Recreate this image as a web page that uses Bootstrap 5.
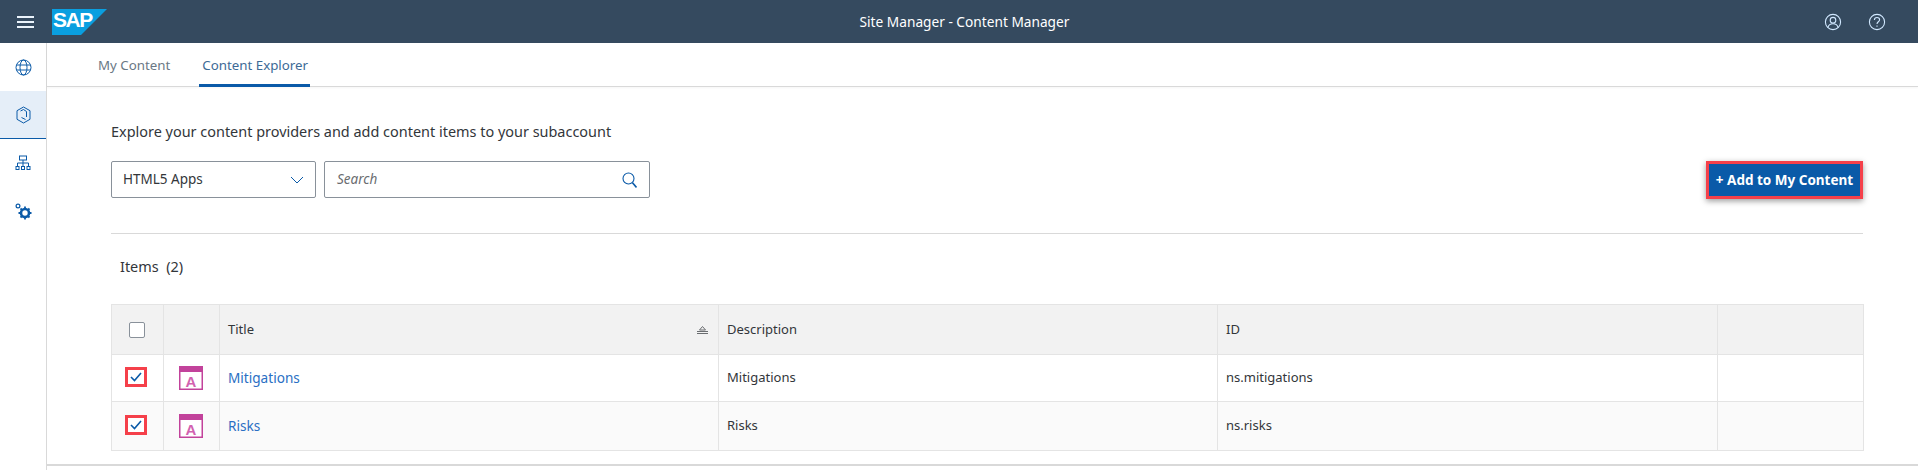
<!DOCTYPE html>
<html lang="en"><head><meta charset="utf-8"><title>Content Manager</title>
<link rel="stylesheet" href="https://cdn.jsdelivr.net/npm/bootstrap@5.3.0/dist/css/bootstrap.min.css">
<style>
html,body{height:470px;overflow:hidden}
body{font-family:"Noto Sans","Liberation Sans",sans-serif;font-size:14px;color:#32363a;background:#fff}
.shell-bar{height:43px;background:#354a5f;color:#fff;padding-left:17px;padding-right:32px}
.shell-title{font-size:13.7px;left:0;right:0;top:0;line-height:43px;pointer-events:none;padding-left:11px}
.burger{width:17px;height:12px;border-top:2px solid #eaf3fb;border-bottom:2px solid #eaf3fb;position:relative;margin-right:18px}
.burger::after{content:"";position:absolute;left:0;right:0;top:3px;height:2px;background:#eaf3fb}
.shell-icons{gap:26px}
.sap-word{left:53px;top:7px;font-size:21px;line-height:26px;letter-spacing:-1.5px;font-family:"Liberation Sans",sans-serif}
.side-rail{width:47px;height:427px;border-right:1px solid #d9d9d9}
.rail-item{height:48px}
.rail-item.on{background:#e5eef8;border-bottom:1px solid #0a5aa8}
.work{height:423px;border-bottom:2px solid #d9d9d9;min-width:0}
.tabbar{height:44px;border-bottom:1px solid #d9d9d9;padding-left:49px;gap:27px;box-shadow:0 1px 2px rgba(0,0,0,.04)}
.tabitem{padding:0 2px;line-height:44px;height:44px;color:#6a7885;font-size:13.3px}
.tabitem.on{color:#3d6a96;border-bottom:3px solid #0a5aa8;padding:0 2px 0 3px}
.work-body{padding:35px 55px 0 64px}
.intro{font-size:14.45px;line-height:20px;margin-bottom:19px;color:#32363a}
.fake-select{width:205px;height:37px;border:1px solid #89919a;border-radius:2px;padding:0 11px;font-size:13.5px}
.fake-search{width:326px;height:37px;border:1px solid #89919a;border-radius:2px;padding:0 12px;margin-left:8px;font-size:13.5px;font-style:italic;color:#6a6d70}
.add-btn{width:157px;height:38px;border:3px solid #f5404a;border-radius:0;background:#0a5aa8;color:#fff;font-weight:700;font-size:13.5px;padding:0;box-shadow:0 2px 6px rgba(0,0,0,.4);white-space:nowrap}
.add-btn:hover{background:#0a5aa8;color:#fff;border-color:#f5404a}
.split{border-top:1px solid #d9d9d9;margin-top:34px;padding:23px 0 0 9px}
.count{font-size:14.45px;line-height:20px;margin-bottom:27px;color:#32363a}
.data-table{margin:0 0 0 -9px;width:1752px;table-layout:fixed;border-collapse:collapse;font-size:13px}
.data-table th,.data-table td{border:1px solid #e4e4e4;padding:0 8px;vertical-align:middle;font-weight:400;color:#32363a;background:transparent;box-shadow:none}
.data-table thead tr{height:50px;background:#f2f2f2}
.data-table tbody tr{height:47px;background:#fff}
.data-table tbody tr:last-child{height:49px;background:#fafafa}
.data-table a{color:#2a6fc4;text-decoration:none;font-size:13.6px}
.box{width:16px;height:16px;border:1px solid #89919a;border-radius:2px;background:#fff;margin-left:17px}
.box-mark{width:22px;height:20px;border:3px solid #f5404a;background:#fff;margin-left:13px;margin-top:-2px}
.sort-cell{justify-content:space-between}
.app-ico{display:block;margin-left:15px}
.cell-center{padding:0!important}
.title-head{padding-right:10px!important}
</style></head>
<body>
<header class="shell-bar d-flex align-items-center position-relative">
  <div class="burger"></div>
  <svg width="55" height="26" viewBox="0 0 55 26" aria-hidden="true"><polygon points="0,0 55,0 29,26 0,26" fill="#0a9fe0"/></svg>
  <span class="sap-word position-absolute fw-bold text-white">SAP</span>
  <div class="shell-title position-absolute text-center">Site Manager - Content Manager</div>
  <div class="shell-icons d-flex ms-auto">
    <svg width="18" height="18" viewBox="0 0 18 18" fill="none" stroke="#d1e8ff" stroke-width="1.1"><circle cx="9" cy="9" r="7.6"/><circle cx="9" cy="7.2" r="2.8"/><path d="M4 14.400c.6-2.500 2.500-3.600 5-3.600s4.400 1.100 5 3.600"/></svg>
    <svg width="18" height="18" viewBox="0 0 18 18" fill="none" stroke="#d1e8ff" stroke-width="1.1"><circle cx="9" cy="9" r="7.6"/><path d="M6.400 7c0-1.500 1.100-2.500 2.600-2.500s2.600 1 2.600 2.300c0 2-2.600 2-2.600 4.200"/><path d="M9 12.600v1.200"/></svg>
  </div>
</header>
<div class="d-flex">
  <nav class="side-rail flex-shrink-0">
    <div class="rail-item d-flex align-items-center justify-content-center"><svg width="17" height="17" viewBox="0 0 17 17" fill="none" stroke="#0a5aa8" stroke-width="1"><circle cx="8.500" cy="8.500" r="7.500"/><ellipse cx="8.500" cy="8.500" rx="3.500" ry="7.500"/><path d="M1.500 6h14M1.500 11h14"/></svg></div>
    <div class="rail-item on d-flex align-items-center justify-content-center"><svg width="15" height="18" viewBox="0 0 15 18" fill="none" stroke="#0a5aa8" stroke-width="1"><path d="M7.500 1l6.500 3.700v8.600L7.500 17 1 13.300V4.700z"/><path d="M4.500 5L7.500 3.500 10.500 5.500v5.500M9.500 13.500L5.500 11.500"/></svg></div>
    <div class="rail-item d-flex align-items-center justify-content-center"><svg width="16" height="16" viewBox="0 0 16 16" fill="none" stroke="#0a5aa8" stroke-width="1"><rect x="4.500" y="1" width="7" height="4"/><path d="M8 5v6M2.500 11V8h11v3"/><rect x="1" y="11.500" width="3" height="3"/><rect x="6.500" y="11.500" width="3" height="3"/><rect x="12" y="11.500" width="3" height="3"/></svg></div>
    <div class="rail-item d-flex align-items-center justify-content-center"><svg width="17" height="17" viewBox="0 0 17 17" fill="none" stroke="#0a5aa8"><circle cx="3" cy="3" r="1.900" stroke-width="1.200"/><circle cx="10" cy="10" r="4" stroke-width="2.600"/><path d="M10 3.500v2.200M10 14.300v2.200M3.500 10h2.200M14.300 10h2.200M5.500 5.500l1.500 1.500M13 13l1.500 1.500M14.500 5.500L13 7M7 13l-1.500 1.500" stroke-width="1.800"/></svg></div>
  </nav>
  <main class="work flex-grow-1">
    <div class="tabbar d-flex">
      <div class="tabitem">My Content</div>
      <div class="tabitem on">Content Explorer</div>
    </div>
    <div class="work-body">
      <p class="intro">Explore your content providers and add content items to your subaccount</p>
      <div class="d-flex align-items-start">
        <div class="fake-select d-flex align-items-center justify-content-between">HTML5 Apps
          <svg width="14" height="8" viewBox="0 0 14 8" fill="none" stroke="#0a5aa8"><path d="M1 1l6 6 6-6"/></svg></div>
        <div class="fake-search d-flex align-items-center justify-content-between">Search
          <svg width="15" height="16" viewBox="0 0 15 16" fill="none" stroke="#0a5aa8" stroke-width="1.100"><circle cx="6.500" cy="6.500" r="5.500"/><path d="M10.500 10.800l4 4.600" stroke-width="1.600"/></svg></div>
        <button type="button" class="btn add-btn ms-auto">+ Add to My Content</button>
      </div>
      <div class="split">
        <div class="count">Items&nbsp; (2)</div>
        <table class="table data-table">
          <colgroup><col style="width:52px"><col style="width:56px"><col style="width:499px"><col style="width:499px"><col style="width:500px"><col style="width:146px"></colgroup>
          <thead><tr>
            <th class="cell-center"><div class="box"></div></th><th></th>
            <th class="title-head"><div class="d-flex align-items-center sort-cell">Title
              <svg width="11" height="8" viewBox="0 0 11 8" fill="none" stroke="#6a6d70"><path d="M5.500 .5L8.500 4h-6zM0 5.500h11M0 7.500h11"/></svg></div></th>
            <th>Description</th><th>ID</th><th></th>
          </tr></thead>
          <tbody>
            <tr><td class="cell-center"><div class="box-mark d-flex align-items-center justify-content-center"><svg width="12" height="10" viewBox="0 0 12 10" fill="none" stroke="#0a5aa8" stroke-width="1.600"><path d="M1 5l3.500 3.500L11 1"/></svg></div></td>
              <td class="cell-center"><svg class="app-ico" width="24" height="24" viewBox="0 0 24 24"><rect x=".75" y=".75" width="22.500" height="22.500" fill="#fff" stroke="#c2429b" stroke-width="1.500"/><rect width="24" height="6" fill="#c2429b"/><text x="12" y="20.500" text-anchor="middle" font-size="15" font-weight="700" font-family="Liberation Sans" fill="#d262b0">A</text></svg></td>
              <td><a href="#">Mitigations</a></td><td>Mitigations</td><td>ns.mitigations</td><td></td></tr>
            <tr><td class="cell-center"><div class="box-mark d-flex align-items-center justify-content-center"><svg width="12" height="10" viewBox="0 0 12 10" fill="none" stroke="#0a5aa8" stroke-width="1.600"><path d="M1 5l3.500 3.500L11 1"/></svg></div></td>
              <td class="cell-center"><svg class="app-ico" width="24" height="24" viewBox="0 0 24 24"><rect x=".75" y=".75" width="22.500" height="22.500" fill="#fff" stroke="#c2429b" stroke-width="1.500"/><rect width="24" height="6" fill="#c2429b"/><text x="12" y="20.500" text-anchor="middle" font-size="15" font-weight="700" font-family="Liberation Sans" fill="#d262b0">A</text></svg></td>
              <td><a href="#">Risks</a></td><td>Risks</td><td>ns.risks</td><td></td></tr>
          </tbody>
        </table>
      </div>
    </div>
  </main>
</div>
</body></html>
